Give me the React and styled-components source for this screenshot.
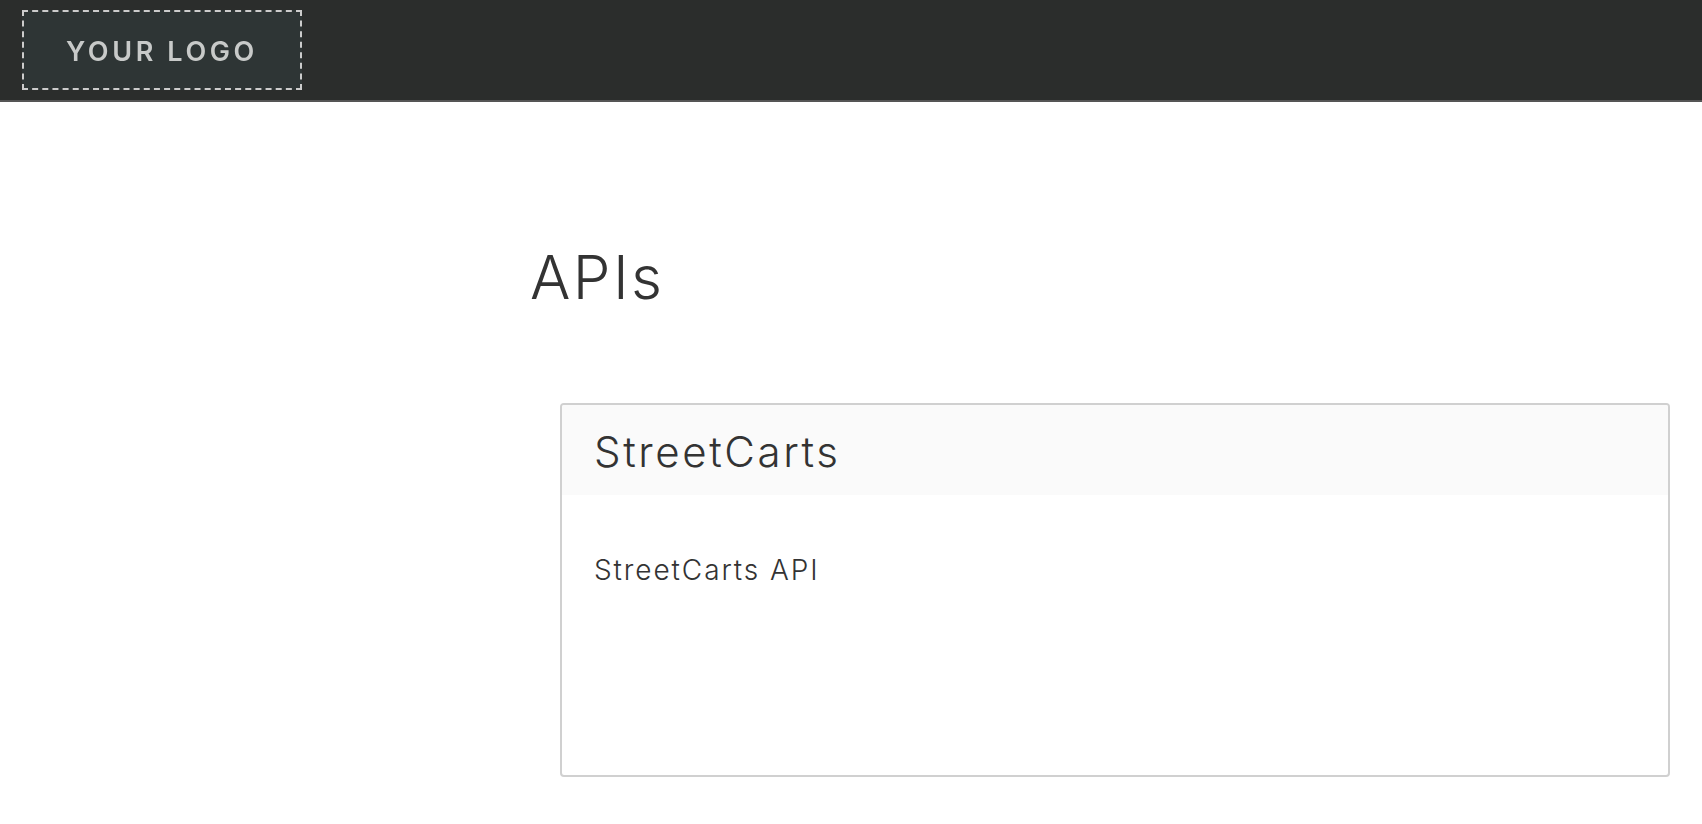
import styled, { createGlobalStyle } from 'styled-components';

const GlobalStyle = createGlobalStyle`
  html, body {
    margin: 0;
    padding: 0;
    background: #fff;
    color: #333;
    font-family: Inter, "Open Sans", sans-serif;
    font-weight: 300;
  }
`;

const Header = styled.header`
  height: 100px;
  display: flex;
  align-items: center;
  padding-left: 22px;
  background: #2b2d2c;
  border-bottom: 2px solid #555;
`;

const Logo = styled.div`
  box-sizing: border-box;
  width: 280px;
  height: 80px;
  display: flex;
  align-items: center;
  justify-content: center;
  padding-top: 3px;
  background: #2e3535;
  border: 2px dashed #ccc;
`;

const LogoText = styled.span`
  color: #c8cac9;
  font-size: 27px;
  font-weight: 600;
  letter-spacing: 3.6px;
  filter: blur(0.6px);
`;

const Main = styled.main`
  padding: 140px 32px 0 530px;
`;

const Title = styled.h1`
  margin: 0 0 91px;
  font-size: 60px;
  line-height: 70px;
  font-weight: 300;
  letter-spacing: 2.4px;
  color: #333;
`;

const Cards = styled.section`
  padding-left: 30px;
`;

const Card = styled.article`
  box-sizing: border-box;
  height: 374px;
  border: 2px solid #d0d0d0;
  border-radius: 4px;
  overflow: hidden;
`;

const CardHeader = styled.div`
  height: 90px;
  display: flex;
  align-items: center;
  padding: 2px 0 0 32px;
  box-sizing: border-box;
  background: #fafafa;
  font-size: 42px;
  font-weight: 300;
  letter-spacing: 2.6px;
`;

const CardBody = styled.p`
  margin: 0;
  padding: 57px 32px 0;
  font-size: 28px;
  line-height: 36px;
  font-weight: 300;
  letter-spacing: 1.9px;
`;

export default function App() {
  return (
    <>
      <GlobalStyle />
      <Header>
        <Logo>
          <LogoText>YOUR LOGO</LogoText>
        </Logo>
      </Header>
      <Main>
        <Title>APIs</Title>
        <Cards>
          <Card>
            <CardHeader>StreetCarts</CardHeader>
            <CardBody>StreetCarts API</CardBody>
          </Card>
        </Cards>
      </Main>
    </>
  );
}
